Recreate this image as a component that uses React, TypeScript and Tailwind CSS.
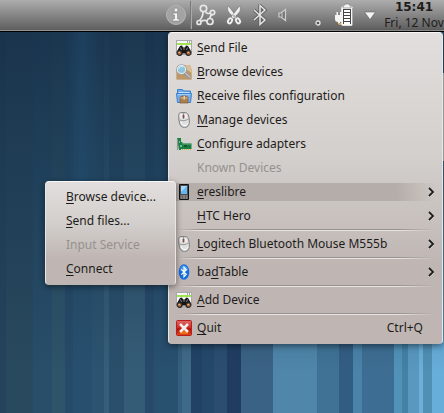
import type { ReactNode } from "react";

/* [x, width, colour] of each wallpaper stripe */
const stripes: [number, number, string][] = [
  [0, 6, "#25445b"], [6, 27, "#29495e"], [33, 19, "#284e6a"], [52, 13, "#2e5469"],
  [65, 8, "#264a69"], [73, 19, "#28506e"], [92, 12, "#2c5370"], [104, 5, "#355e79"],
  [109, 15, "#2a4f6c"], [124, 21, "#355c76"], [145, 9, "#27496a"], [154, 24, "#28506f"],
  [178, 4, "#345e7c"], [182, 9, "#3f6a87"], [191, 11, "#214264"], [202, 12, "#24486a"],
  [214, 13, "#2a4d70"], [227, 14, "#203d60"], [241, 32, "#3a6284"], [273, 44, "#4f86aa"],
  [317, 22, "#3f7295"], [339, 14, "#325d82"], [353, 9, "#4a82a8"], [362, 32, "#3d6d92"],
  [394, 8, "#5192b9"], [402, 6, "#4580a5"], [408, 11, "#5a98c0"], [419, 4, "#6ab0d8"],
  [423, 9, "#5090b5"], [432, 12, "#68aedb"],
];

function Wallpaper() {
  return (
    <svg className="absolute inset-0 h-full w-full" viewBox="0 0 444 413" preserveAspectRatio="none" shapeRendering="crispEdges" aria-hidden="true">
      <defs>
        <linearGradient id="night" x1="0" y1="0" x2="0" y2="1">
          <stop offset="0" stopColor="#152c45" stopOpacity=".84" />
          <stop offset=".45" stopColor="#1a3851" stopOpacity=".6" />
          <stop offset=".9" stopColor="#1a3851" stopOpacity="0" />
        </linearGradient>
        <linearGradient id="glow" x1="0" y1="0" x2="1" y2="0">
          <stop offset="0" stopColor="#28608a" stopOpacity="0" />
          <stop offset=".5" stopColor="#28608a" stopOpacity=".25" />
          <stop offset="1" stopColor="#28608a" stopOpacity="0" />
        </linearGradient>
      </defs>
      {stripes.map(([x, w, fill]) => (
        <rect key={x} x={x} width={w} height="413" fill={fill} />
      ))}
      <rect width="444" height="413" fill="url(#night)" />
      <rect x="62" width="40" height="240" fill="url(#glow)" />
      <rect x="443" y="73" width="1" height="88" fill="#b9bcbf" />
    </svg>
  );
}

function InfoIcon() {
  return (
    <svg width="20" height="22" viewBox="0 0 20 22" aria-hidden="true">
      <circle cx="10" cy="11" r="9.5" fill="#a3a3a3" stroke="#b4b4b4" />
      <g fill="#f4f4f4" stroke="#777" strokeWidth=".5">
        <circle cx="10" cy="6" r="1.9" />
        <path d="M7 9h4.500v6H13.500v2h-7v-2h2v-4H7z" />
      </g>
    </svg>
  );
}

function MoleculeIcon() {
  return (
    <svg width="20" height="22" viewBox="0 0 20 22" fill="none" aria-hidden="true">
      <g stroke="#e6e6e6" strokeWidth="1.700">
        <circle cx="7.500" cy="4.500" r="3.200" />
        <circle cx="16.500" cy="8.500" r="2.200" />
        <circle cx="3" cy="18.500" r="2" />
        <circle cx="14" cy="17.500" r="3" />
        <path d="M7 8c0 4-1 6-3.500 8.500M9.500 7.500c.5 2 3 2.500 5 1.500M16.500 11c-2 0-2.500 1.500-2.500 3.500M5 17.500c2-1.500 4-1.500 6-.500" />
      </g>
    </svg>
  );
}

function ScissorsIcon() {
  return (
    <svg width="16" height="20" viewBox="0 0 16 20" aria-hidden="true">
      <g stroke="#666" strokeWidth=".5" fill="#f0f0f0">
        <path d="M2.500 1C1 2.500 1.500 5 2.500 7l6.500 7 1.500-2.500z" />
        <path d="M13.500 1c1.500 1.500 1 4 0 6l-6.500 7-1.500-2.500z" />
      </g>
      <g fill="#777" stroke="#f0f0f0" strokeWidth="1.900">
        <ellipse cx="4" cy="15.800" rx="1.800" ry="2.700" transform="rotate(30 4 15.800)" />
        <ellipse cx="12" cy="15.800" rx="1.800" ry="2.700" transform="rotate(-30 12 15.800)" />
      </g>
      <circle cx="8" cy="11" r=".8" fill="#777" />
    </svg>
  );
}

function BluetoothTrayIcon() {
  return (
    <svg width="16" height="22" viewBox="0 0 16 22" fill="none" aria-hidden="true">
      <path d="M2 6l11 10-5 4.500v-19l5 4.500-11 10" stroke="#606060" strokeWidth="3.200" />
      <path d="M2 6l11 10-5 4.500v-19l5 4.500-11 10" stroke="#e4e4e4" strokeWidth="1.500" />
    </svg>
  );
}

function SpeakerIcon() {
  return (
    <svg width="10" height="14" viewBox="0 0 10 14" aria-hidden="true">
      <path d="M1 5h2l4.500-3.500v11L3 9H1z" fill="#777" stroke="#cecece" strokeWidth="1.200" />
      <path d="M4 5v4" stroke="#ccc" />
    </svg>
  );
}

function ClipboardIcon() {
  return (
    <svg width="20" height="24" viewBox="0 0 20 24" aria-hidden="true">
      <rect x="7.500" y="3.500" width="11" height="19" rx="1.500" fill="#fafafa" stroke="#e0e0e0" />
      <path d="M18.500 5v17" stroke="#aaa" />
      <rect x="9" y="6" width="8" height="15" fill="#444" />
      <path d="M10 8h6M10 11h6M10 14h6M10 17h6M10 20h6" stroke="#fff" strokeWidth="2" />
      <path d="M9 4c0-2 2-1 2-3h4c0 2 2 1 2 3v1H9z" fill="#f5f5f5" stroke="#777" strokeWidth=".6" />
      <path d="M1 12h1.500V9H4v3h2V9h1.500v3H9v4c0 2-1.500 3-3 3v2H4v-2c-2 0-3-1-3-3z" fill="#f4f4f4" />
      <path d="M4 20h3v2H5z" fill="#dca24c" />
    </svg>
  );
}

function BinocularsIcon() {
  return (
    <svg width="16" height="16" viewBox="0 0 16 16" aria-hidden="true">
      <rect x=".5" y=".5" width="15" height="14" fill="#f6f6f6" stroke="#aaa" />
      <path d="M11 2h1M13 2h1" stroke="#555" />
      <path d="M1 4h14" stroke="#84dc18" strokeWidth="1.500" />
      <path d="M4 6l2-.5 1 2h2l1-2 2 .5 3.500 6c0 5-6 5-6 1.500h-3C6.500 17 .5 17 .5 12z" fill="#151515" />
      <path d="M4.500 7.500 5.500 10M11.500 7.500 10.500 10M7 9h2" stroke="#888" />
      <circle cx="3.500" cy="13" r="2.200" fill="#b66c3a" stroke="#333" />
      <circle cx="12.500" cy="13" r="2.200" fill="#b66c3a" stroke="#333" />
      <path d="M2.500 12.500h1.500M11.500 12.500H13" stroke="#e8b58b" />
    </svg>
  );
}

function SearchBoxIcon() {
  return (
    <svg width="16" height="16" viewBox="0 0 16 16" aria-hidden="true">
      <path d="M2 1h12l1.500 4v10.500H.5V5z" fill="#c9a57a" />
      <path d="M.5 5h15v10.500H.5z" fill="#bf986a" />
      <path d="M10 1h3l2.500 4v4L10 5z" fill="#dcbf98" />
      <path d="M9 9l5 5" stroke="#9097a0" strokeWidth="3" />
      <path d="M9 8.500l5 5" stroke="#e6e8ec" strokeWidth="1" />
      <circle cx="5.500" cy="5.500" r="4.300" fill="#8fc4dd" stroke="#e9eef0" strokeWidth="1.400" />
      <circle cx="5.500" cy="5.500" r="5" fill="none" stroke="#71858f" strokeWidth=".5" />
      <path d="M3 5c0-2 2-3 4-2" stroke="#d9f1fa" fill="none" />
    </svg>
  );
}

function FolderIcon() {
  return (
    <svg width="16" height="16" viewBox="0 0 16 16" aria-hidden="true">
      <path d="M1.500 9V1.500h5l1 1.500h7v6z" fill="#6fabe9" stroke="#3b7fcd" />
      <path d="M2.500 4.500h11" stroke="#c5e0fa" />
      <path d="M.5 5.500h15l-1 9h-13z" fill="#75b0ee" stroke="#3b7fcd" />
      <path d="M1.500 6.500h13" stroke="#a5cdf6" />
      <path d="M4 9.500 5.500 8h5L12 9.500V15H4z" fill="#ad8052" stroke="#7e5932" strokeWidth=".7" />
      <path d="M4.500 10h7" stroke="#dab88b" />
      <path d="M7.500 8h1.500v3.500H7.500z" fill="#e2cda9" />
    </svg>
  );
}

function MouseIcon() {
  return (
    <svg width="16" height="16" viewBox="0 0 16 16" aria-hidden="true">
      <path d="M5 .6C3 .6 2.500 2 2.800 6c.3 6 1.800 9.400 5.700 9.400S14 12 13.200 7C12.500 2 11.500 .6 8 .6z" fill="#dedede" stroke="#7c7c7c" />
      <path d="M3.500 8c3 1 6 1 9-1M7.500 1v6" stroke="#888" fill="none" strokeWidth=".8" />
      <path d="M7.500 3v3" stroke="#8d4444" strokeWidth="1.700" />
      <path d="M5 2v4M10 2v4" stroke="#fff" />
      <path d="M5 10c1 4 5 5 7 1" stroke="#fff" fill="none" />
    </svg>
  );
}

function AdapterIcon() {
  return (
    <svg width="16" height="16" viewBox="0 0 16 16" aria-hidden="true">
      <path d="M1 2h4v4h1.500v1.500h9V13H5v1H3z" fill="#1c8044" />
      <path d="M1.500 3v11" stroke="#8f9891" strokeWidth="1.200" />
      <path d="M6 13.500h9" stroke="#d7b34a" strokeDasharray="1 1" />
      <path d="M3 5h1v2H3zM4 9h2v2H4z" fill="#75bd88" />
      <path d="M8 9h3v2H8zM13 10h1v1h-1z" fill="#0f5a2d" />
      <path d="M6.500 8h9" stroke="#5aa873" />
    </svg>
  );
}

function PhoneIcon() {
  return (
    <svg width="16" height="16" viewBox="0 0 16 16" aria-hidden="true">
      <rect x="3" width="10" height="16" rx="1" fill="#111" />
      <rect x="4" y="1" width="8" height="14" fill="#4d4d4d" />
      <rect x="5" y="2" width="6" height="8" fill="#62b7f4" />
      <path d="M5 2h6L5 8z" fill="#a9d9fa" />
      <path d="M4.500 12h7M4.500 14h7" stroke="#b5b5b5" strokeDasharray="2 .5" />
    </svg>
  );
}

function BluetoothIcon() {
  return (
    <svg width="16" height="16" viewBox="0 0 16 16" aria-hidden="true">
      <ellipse cx="8" cy="8" rx="5.300" ry="7.700" fill="#126de0" />
      <path d="M4 6c0-6 8-6 8 0-2 2-6 2-8 0z" fill="#4496ee" />
      <path d="M5.300 5.300l5 5L8 12.700V3.300l2.300 2.400-5 5" fill="none" stroke="#fff" strokeWidth="1.200" />
    </svg>
  );
}

function QuitIcon() {
  return (
    <svg width="16" height="16" viewBox="0 0 16 16" aria-hidden="true">
      <defs>
        <linearGradient id="quit" x1="0" y1="0" x2="0" y2="1">
          <stop offset="0" stopColor="#df6c68" />
          <stop offset=".5" stopColor="#c92b24" />
          <stop offset=".55" stopColor="#b31008" />
          <stop offset="1" stopColor="#df4a16" />
        </linearGradient>
      </defs>
      <rect x=".5" y=".5" width="15" height="15" rx="1" fill="url(#quit)" stroke="#b71e1c" />
      <path d="M4 14c1-5 7-5 8 0z" fill="#f06a16" />
      <path d="M4 4l8 8M12 4l-8 8" stroke="#f1eeee" strokeWidth="2.500" />
    </svg>
  );
}

function Chevron() {
  return (
    <svg width="7" height="10" viewBox="0 0 7 10" fill="none" aria-hidden="true">
      <path d="M1 2l4 4-4 4" stroke="#eee" strokeWidth="1.500" />
      <path d="M1 1l4 4-4 4" stroke="#1c1c1c" strokeWidth="1.800" />
    </svg>
  );
}

type ItemProps = {
  label: string;
  /* index of the underlined accelerator letter */
  accel?: number;
  icon?: ReactNode;
  shortcut?: string;
  submenu?: boolean;
  active?: boolean;
  disabled?: boolean;
  /* leave out the icon column */
  plain?: boolean;
};

function Label({ label, accel }: { label: string; accel?: number }) {
  if (accel === undefined) return <span>{label}</span>;
  return (
    <span>
      {label.slice(0, accel)}
      <span className="underline decoration-1 underline-offset-2 [text-decoration-skip-ink:none]">{label[accel]}</span>
      {label.slice(accel + 1)}
    </span>
  );
}

function MenuItem({ label, accel, icon, shortcut, submenu, active, disabled, plain }: ItemProps) {
  return (
    <li role="none" className={"flex h-6 items-center " + (plain ? "px-5" : "px-[7px]")}>
      <button
        type="button"
        role="menuitem"
        disabled={disabled}
        aria-haspopup={submenu ? "menu" : undefined}
        aria-expanded={submenu ? !!active : undefined}
        className={
          "flex h-[18px] w-full items-center gap-[5px] whitespace-nowrap text-left disabled:text-[#96918f] " +
          (active ? "bg-[linear-gradient(to_right,#b5adaa_85%,transparent)]" : "")
        }
      >
        {!plain && <span className="h-4 w-4 shrink-0">{icon}</span>}
        <Label label={label} accel={accel} />
        {shortcut && <span className="ml-auto pr-3">{shortcut}</span>}
        {submenu && <span className="ml-auto"><Chevron /></span>}
      </button>
    </li>
  );
}

function Separator() {
  return (
    <li role="separator" className="mx-[7px] flex h-1 flex-col justify-center">
      <div className="h-px bg-[linear-gradient(to_right,transparent,#969190_10%,#969190_85%,transparent)]" />
      <div className="h-px bg-[linear-gradient(to_right,transparent,#e9e5e3_10%,#e9e5e3_85%,transparent)]" />
    </li>
  );
}

const menuSurface =
  "rounded-[4px] border border-[#e9e6e4] border-b-[#bdb5b2] border-t-[#f8f7f6] bg-[linear-gradient(#e2dedd,#d3cfcc_40%,#bfb6b3_75%)] py-[3px] shadow-[0_2px_6px_rgba(0,0,0,0.45)]";

export default function App() {
  return (
    <div className="relative min-h-screen overflow-hidden bg-[#24445f] font-['Noto_Sans',sans-serif] text-[12px] leading-4 text-[#1e1c1b]">
      <Wallpaper />

      <header className="relative flex h-8 items-center justify-end border-b border-black bg-[linear-gradient(#adadad,#5c5c5c)] pb-px shadow-[inset_0_-1px_0_#929292]">
        <button type="button" aria-label="Information"><InfoIcon /></button>
        <div className="mx-1 flex h-7">
          <div className="w-px bg-[#777]" />
          <div className="w-px bg-[#aaa]" />
        </div>
        <div className="flex items-center gap-[10px]">
          <button type="button" aria-label="Desktop search"><MoleculeIcon /></button>
          <button type="button" aria-label="Clipboard"><ScissorsIcon /></button>
          <button type="button" aria-label="Bluetooth"><BluetoothTrayIcon /></button>
          <button type="button" aria-label="Volume"><SpeakerIcon /></button>
        </div>
        <button type="button" aria-label="Notifications" className="ml-[26px] mr-3 self-end pb-[3px]">
          <svg width="8" height="8" viewBox="0 0 8 8" aria-hidden="true">
            <circle cx="4" cy="4" r="2" fill="#555" stroke="#e2e2e2" strokeWidth="1.300" />
          </svg>
        </button>
        <button type="button" aria-label="Battery" className="mr-[10px]"><ClipboardIcon /></button>
        <button type="button" aria-label="Show hidden icons" className="mr-2">
          <svg width="12" height="9" viewBox="0 0 12 9" aria-hidden="true">
            <path d="M.5 1h11L6 8.500z" fill="#f4f4f4" stroke="#666" strokeWidth=".6" />
          </svg>
        </button>
        <time className="flex w-[60px] flex-col items-center whitespace-nowrap leading-[15px]">
          <span className="font-['DejaVu_Sans',sans-serif] font-bold">15:41</span>
          <span>Fri, 12 Nov</span>
        </time>
      </header>

      <ul role="menu" aria-label="Bluetooth" className={"absolute right-px top-8 w-[275px] " + menuSurface}>
        <MenuItem label="Send File" accel={0} icon={<BinocularsIcon />} />
        <MenuItem label="Browse devices" accel={0} icon={<SearchBoxIcon />} />
        <MenuItem label="Receive files configuration" accel={0} icon={<FolderIcon />} />
        <MenuItem label="Manage devices" accel={0} icon={<MouseIcon />} />
        <MenuItem label="Configure adapters" accel={0} icon={<AdapterIcon />} />
        <MenuItem label="Known Devices" disabled />
        <MenuItem label="ereslibre" accel={0} icon={<PhoneIcon />} submenu active />
        <MenuItem label="HTC Hero" accel={0} submenu />
        <Separator />
        <MenuItem label="Logitech Bluetooth Mouse M555b" accel={0} icon={<MouseIcon />} submenu />
        <Separator />
        <MenuItem label="badTable" accel={2} icon={<BluetoothIcon />} submenu />
        <Separator />
        <MenuItem label="Add Device" accel={0} icon={<BinocularsIcon />} />
        <Separator />
        <MenuItem label="Quit" accel={0} icon={<QuitIcon />} shortcut="Ctrl+Q" />
      </ul>

      <ul role="menu" aria-label="ereslibre" className={"absolute right-[268px] top-[181px] w-[131px] " + menuSurface}>
        <MenuItem plain label="Browse device..." accel={0} />
        <MenuItem plain label="Send files..." accel={0} />
        <MenuItem plain label="Input Service" disabled />
        <MenuItem plain label="Connect" accel={0} />
      </ul>
    </div>
  );
}
